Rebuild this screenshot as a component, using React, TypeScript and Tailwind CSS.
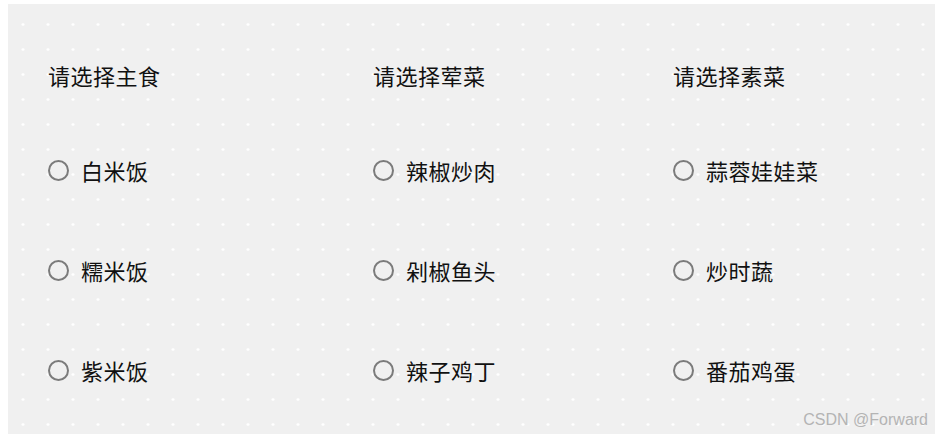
const columns = [
  { title: '请选择主食', items: ['白米饭', '糯米饭', '紫米饭'], width: 'w-[325px]' },
  { title: '请选择荤菜', items: ['辣椒炒肉', '剁椒鱼头', '辣子鸡丁'], width: 'w-[300px]' },
  { title: '请选择素菜', items: ['蒜蓉娃娃菜', '炒时蔬', '番茄鸡蛋'], width: 'w-[250px]' },
];

function Radio({ label }: { label: string }) {
  return (
    <label className="flex h-[30px] items-center gap-[12px]">
      <span className="w-[21px] h-[21px] rounded-full border-2 border-[#7b7b7b] bg-transparent flex-shrink-0" />
      <span className="tracking-[0.5px]">{label}</span>
    </label>
  );
}

export default function App() {
  return (
    <div className="bg-white w-[940px] h-[441px] pt-[4px] pl-[8px]">
      <div
        className="relative w-[927px] h-[430px] bg-[#f0f0f0] bg-[radial-gradient(circle,#ffffff_1px,transparent_1.6px)] bg-[length:25px_25px] bg-[position:2.5px_8px] pl-[40px] pt-[56px] flex text-[22px] text-[#111111]"
        style={{ fontFamily: '"Noto Sans CJK SC", "Noto Sans", sans-serif' }}
      >
        {columns.map((col) => (
          <div key={col.title} className={`${col.width} flex flex-col`}>
            <div className="h-[30px] flex items-center tracking-[0.5px]">{col.title}</div>
            <div className="mt-[65px] flex flex-col gap-[70px]">
              {col.items.map((item) => (
                <Radio key={item} label={item} />
              ))}
            </div>
          </div>
        ))}

        {/* watermark */}
        <span
          className="absolute right-[7px] bottom-[6px] text-[16px] leading-[16px] text-[#b4b4b4]"
          style={{ fontFamily: '"Liberation Sans", Arial, sans-serif' }}
        >
          CSDN @Forward
        </span>
      </div>
    </div>
  );
}
